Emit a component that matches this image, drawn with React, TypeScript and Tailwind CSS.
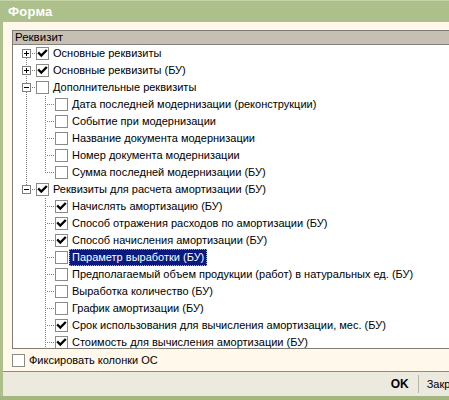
import React from 'react';

type Row = {
  label: string;
  checked: boolean;
  level: 0 | 1;
  expander?: '+' | '-';
  up?: boolean;
  down?: boolean;
  parentCont?: boolean;
  lastChild?: boolean;
  selected?: boolean;
};

const rows: Row[] = [
  { label: 'Основные реквизиты', checked: true, level: 0, expander: '+', down: true },
  { label: 'Основные реквизиты (БУ)', checked: true, level: 0, expander: '+', up: true, down: true },
  { label: 'Дополнительные реквизиты', checked: false, level: 0, expander: '-', up: true, down: true },
  { label: 'Дата последней модернизации (реконструкции)', checked: false, level: 1, parentCont: true },
  { label: 'Событие при модернизации', checked: false, level: 1, parentCont: true },
  { label: 'Название документа модернизации', checked: false, level: 1, parentCont: true },
  { label: 'Номер документа модернизации', checked: false, level: 1, parentCont: true },
  { label: 'Сумма последней модернизации (БУ)', checked: false, level: 1, parentCont: true, lastChild: true },
  { label: 'Реквизиты для расчета амортизации (БУ)', checked: true, level: 0, expander: '-', up: true },
  { label: 'Начислять амортизацию (БУ)', checked: true, level: 1 },
  { label: 'Способ отражения расходов по амортизации (БУ)', checked: true, level: 1 },
  { label: 'Способ начисления амортизации (БУ)', checked: true, level: 1 },
  { label: 'Параметр выработки (БУ)', checked: false, level: 1, selected: true },
  { label: 'Предполагаемый объем продукции (работ) в натуральных ед. (БУ)', checked: false, level: 1 },
  { label: 'Выработка количество (БУ)', checked: false, level: 1 },
  { label: 'График амортизации (БУ)', checked: false, level: 1 },
  { label: 'Срок использования для вычисления амортизации, мес. (БУ)', checked: true, level: 1 },
  { label: 'Стоимость для вычисления амортизации (БУ)', checked: true, level: 1 },
];

const DOT = '#808080';

// dotted 1px lines, phase taken from the page row so dots line up between rows
const vDots = (x: number, y0: number, y1: number, top: number) => {
  const out: React.ReactNode[] = [];
  for (let y = y0; y <= y1; y++) {
    if ((top + y) % 2 === 0) out.push(<rect key={`v${x}-${y}`} x={x} y={y} width={1} height={1} fill={DOT} />);
  }
  return out;
};

const hDots = (y: number, x0: number, x1: number) => {
  const out: React.ReactNode[] = [];
  for (let x = x0; x <= x1; x += 2) out.push(<rect key={`h${y}-${x}`} x={x} y={y} width={1} height={1} fill={DOT} />);
  return out;
};

const Guides: React.FC<{ row: Row; top: number }> = ({ row, top }) => {
  if (row.level === 0) {
    return (
      <svg width={23} height={17} shapeRendering="crispEdges" className="shrink-0">
        {row.up && vDots(13, 0, 3, top)}
        {row.down && vDots(13, 13, 16, top)}
        {hDots(8, 19, 22)}
        <rect x={9.5} y={4.5} width={8} height={8} fill="white" stroke="#7f7f7f" />
        <rect x={11} y={8} width={5} height={1} fill="black" />
        {row.expander === '+' && <rect x={13} y={6} width={1} height={5} fill="black" />}
      </svg>
    );
  }
  return (
    <svg width={42} height={17} shapeRendering="crispEdges" className="shrink-0">
      {row.parentCont && vDots(13, 0, 16, top)}
      {vDots(32, 0, row.lastChild ? 8 : 16, top)}
      {hDots(8, 34, 41)}
    </svg>
  );
};

const CheckBox: React.FC<{ checked: boolean }> = ({ checked }) => (
  <span className="w-[13px] h-[13px] shrink-0 border border-[#8c8a84] bg-white flex items-center justify-center">
    {checked && (
      <svg width={11} height={11} viewBox="0 0 11 11">
        <path d="M2 5.2 L4.3 7.6 L9 2.8" fill="none" stroke="black" strokeWidth={2.3} strokeLinecap="square" />
      </svg>
    )}
  </span>
);

export default function App() {
  return (
    <div className="w-[449px] h-[400px] overflow-hidden bg-[#adc08b] font-['Liberation_Sans',Arial,sans-serif] text-[11px] text-black">
      <div className="w-[490px] h-full flex flex-col">
        {/* Title */}
        <div className="h-[22px] shrink-0 flex items-center pl-[8px] border-t border-[#c4d4a6]">
          <span className="text-white font-bold text-[13px] tracking-[0.2px]">Форма</span>
        </div>

        {/* Body */}
        <div className="flex-1 ml-[3px] mr-[3px] bg-[#fff8eb] flex flex-col">
          <div className="pt-[8px] pl-[9px]">
            <div className="h-[319px] border-l border-t border-b border-[#7f7c75] bg-white overflow-hidden flex flex-col">
              <div className="h-[14px] shrink-0 bg-[#c6bfb4] border-b border-[#85817a] pl-[2px] flex items-center leading-none text-[11.5px]">
                Реквизит
              </div>
              <div className="flex flex-col">
                {rows.map((row, i) => (
                  <div key={i} className="h-[17px] shrink-0 flex items-center">
                    <Guides row={row} top={45 + i * 17} />
                    <CheckBox checked={row.checked} />
                    <span
                      className={
                        'ml-[1px] h-[17px] flex items-center px-[3px] whitespace-nowrap ' +
                        (row.selected ? 'bg-[#0a1a7e] text-white outline outline-1 outline-dotted outline-[#c8b060] -outline-offset-1' : '')
                      }
                    >
                      {row.label}
                    </span>
                  </div>
                ))}
              </div>
            </div>
          </div>

          <div className="h-[22px] shrink-0 flex items-center pl-[9px] gap-[4px]">
            <CheckBox checked={false} />
            <span>Фиксировать колонки ОС</span>
          </div>

          <div className="flex-1 border-t border-[#8f8b82] bg-[#ece9df] flex items-center justify-end pr-[13px]">
            <span className="font-bold text-[12px] px-[6px]">OK</span>
            <span className="w-px h-[18px] bg-[#b8b4aa] mx-[3px]" />
            <span className="px-[5px]">Закрыть</span>
          </div>
        </div>
        <div className="h-[4px] shrink-0 bg-[#a3b67f]" />
      </div>
    </div>
  );
}
